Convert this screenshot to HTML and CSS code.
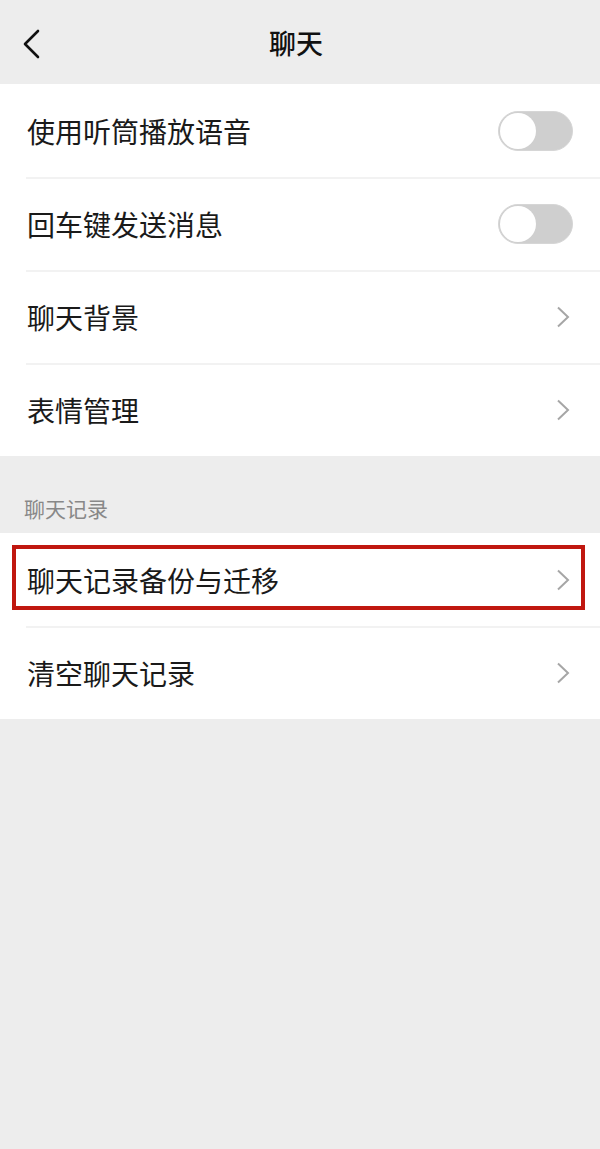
FILE: index.html
```html
<!DOCTYPE html>
<html lang="zh-CN">
<head>
<meta charset="utf-8">
<title>聊天</title>
<link rel="stylesheet" href="styles.css">
</head>
<body>
<div class="page">
  <header class="topbar">
    <span class="back">
      <svg width="20" height="30" viewBox="0 0 20 30"><polyline points="17,2 4,15 17,28" fill="none" stroke="#111" stroke-width="2.6" stroke-linecap="round" stroke-linejoin="round"/></svg>
    </span>
    <h1 class="title">聊天</h1>
  </header>

  <section class="group">
    <div class="row"><span class="label">使用听筒播放语音</span><span class="switch"><span class="knob"></span></span></div>
    <div class="row"><span class="label">回车键发送消息</span><span class="switch"><span class="knob"></span></span></div>
    <div class="row"><span class="label">聊天背景</span><span class="chev"><svg width="14" height="22" viewBox="0 0 14 22"><polyline points="2,1.5 12,11 2,20.5" fill="none" stroke="#a6a6a6" stroke-width="2"/></svg></span></div>
    <div class="row"><span class="label">表情管理</span><span class="chev"><svg width="14" height="22" viewBox="0 0 14 22"><polyline points="2,1.5 12,11 2,20.5" fill="none" stroke="#a6a6a6" stroke-width="2"/></svg></span></div>
  </section>

  <div class="section-title">聊天记录</div>

  <section class="group">
    <div class="row highlighted"><span class="label">聊天记录备份与迁移</span><span class="chev"><svg width="14" height="22" viewBox="0 0 14 22"><polyline points="2,1.5 12,11 2,20.5" fill="none" stroke="#a6a6a6" stroke-width="2"/></svg></span></div>
    <div class="row"><span class="label">清空聊天记录</span><span class="chev"><svg width="14" height="22" viewBox="0 0 14 22"><polyline points="2,1.5 12,11 2,20.5" fill="none" stroke="#a6a6a6" stroke-width="2"/></svg></span></div>
  </section>
</div>
</body>
</html>
```

FILE: styles.css
```css
* { box-sizing: border-box; }
html, body {
  margin: 0;
  padding: 0;
  background: #ededed;
  font-family: "Noto Sans CJK SC", "Noto Sans", sans-serif;
}
.page {
  width: 600px;
  min-height: 1149px;
  background: #ededed;
  display: flex;
  flex-direction: column;
}
.topbar {
  height: 84px;
  display: flex;
  align-items: center;
  justify-content: center;
  position: relative;
}
.back {
  position: absolute;
  left: 21px;
  top: 29px;
  display: flex;
}
.title {
  margin: 0 0 0 -8px;
  font-size: 27px;
  font-weight: 500;
  color: #111;
  letter-spacing: 0;
}
.group {
  background: #fff;
  display: flex;
  flex-direction: column;
}
.row {
  height: 93px;
  display: flex;
  align-items: center;
  justify-content: space-between;
  padding: 0 27px 0 27px;
  position: relative;
}
.row + .row::before {
  content: "";
  position: absolute;
  top: 0;
  left: 26px;
  right: 0;
  height: 2px;
  background: #f2f2f2;
}
.label {
  font-size: 28px;
  color: #1a1a1a;
  font-weight: 400;
}
.switch {
  width: 75px;
  height: 40px;
  border-radius: 20px;
  background: #cfcfcf;
  border: 1px solid #d6d6d6;
  position: relative;
}
.knob {
  position: absolute;
  left: 1px;
  top: 1px;
  width: 36px;
  height: 36px;
  border-radius: 50%;
  background: #fff;
}
.chev {
  display: flex;
  margin-right: 3px;
}
.section-title {
  height: 77px;
  padding: 37px 0 0 24px;
  font-size: 21px;
  color: #888;
  line-height: 30px;
}
.highlighted::after {
  content: "";
  position: absolute;
  left: 12px;
  right: 15px;
  top: 12px;
  bottom: 16px;
  border: 4px solid #c0170f;
}
```
